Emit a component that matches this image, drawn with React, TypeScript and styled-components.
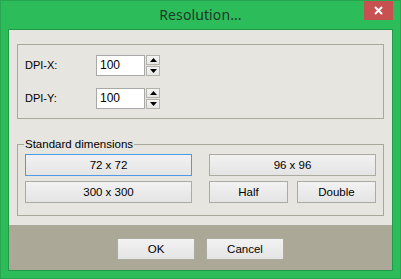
import React from 'react';
import styled, { createGlobalStyle } from 'styled-components';

const Global = createGlobalStyle`
  html, body { margin: 0; padding: 0; }
  body {
    font-family: 'Liberation Sans', Arial, sans-serif;
    font-size: 11px;
    color: #000;
  }
`;

const Window = styled.div`
  width: 401px;
  height: 279px;
  box-sizing: border-box;
  background: #2dbc5a;
  border: 1px solid #27a64f;
  display: flex;
  flex-direction: column;
  padding: 0 7px 7px 7px;
`;

const TitleBar = styled.div`
  height: 28px;
  display: grid;
  grid-template-columns: 1fr auto 1fr;
  align-items: start;
`;

const Title = styled.div`
  grid-column: 2;
  font-family: 'Noto Sans', 'Open Sans', sans-serif;
  font-size: 14px;
  color: #1c3a26;
  line-height: 28px;
  letter-spacing: 0.1px;
`;

const Close = styled.div`
  grid-column: 3;
  justify-self: end;
  width: 29px;
  height: 19px;
  background: #c75050;
  display: flex;
  align-items: center;
  justify-content: center;
`;

const Client = styled.div`
  flex: 1;
  border: 1px solid #1f9a47;
  background: #e6e5e0;
  display: flex;
  flex-direction: column;
`;

const Body = styled.div`
  flex: 1;
  padding: 14px 8px 0 8px;
  display: flex;
  flex-direction: column;
`;

const Group = styled.div`
  border: 1px solid #a9a89a;
  padding: 9px 7px 9px 7px;
  display: flex;
  flex-direction: column;
  gap: 11px;
`;

const Row = styled.div`
  display: flex;
  align-items: center;
  height: 22px;
`;

const Label = styled.span`
  width: 71px;
`;

const Input = styled.div`
  height: 19px;
  border: 1px solid #a8a8a8;
  background: #fff;
  font-size: 12px;
  line-height: 19px;
  padding-left: 3px;
  box-sizing: content-box;
  width: 44px;
`;

const Spin = styled.div`
  margin-left: 1px;
  display: flex;
  flex-direction: column;
  gap: 1px;
`;

const SpinBtn = styled.div`
  width: 12px;
  height: 8px;
  border: 1px solid #b3b2a8;
  background: linear-gradient(#f4f4f4, #e6e6e6);
  display: flex;
  align-items: center;
  justify-content: center;
`;

const Fieldset = styled.fieldset`
  margin: 18px 0 0 0;
  border: 1px solid #a9a89a;
  padding: 3px 7px 12px 7px;
  min-width: 0;
`;

const Legend = styled.legend`
  padding: 0 1px;
  margin-left: -1px;
  font-size: 11.5px;
  line-height: 14px;
`;

const Grid = styled.div`
  display: grid;
  grid-template-columns: 167px 167px;
  column-gap: 17px;
  row-gap: 5px;
`;

const Pair = styled.div`
  display: flex;
  gap: 9px;
`;

const Button = styled.div<{ $focus?: boolean; $w?: number }>`
  box-sizing: border-box;
  height: 22px;
  width: ${({ $w }) => ($w ? `${$w}px` : 'auto')};
  border: 1px solid ${({ $focus }) => ($focus ? '#4d9be6' : '#acaba0')};
  background: linear-gradient(#f2f2f2, #e4e4e4);
  display: flex;
  align-items: center;
  justify-content: center;
  font-size: 11.5px;
`;

const Footer = styled.div`
  height: 45px;
  background: #aba898;
  display: flex;
  justify-content: center;
  align-items: flex-start;
  padding-top: 13px;
  box-sizing: border-box;
  gap: 11px;
`;

const Arrow: React.FC<{ up?: boolean }> = ({ up }) => (
  <svg width="7" height="4" viewBox="0 0 7 4">
    <polygon points={up ? '3.5,0 7,4 0,4' : '0,0 7,0 3.5,4'} fill="#000" />
  </svg>
);

const Spinner: React.FC = () => (
  <Spin>
    <SpinBtn>
      <Arrow up />
    </SpinBtn>
    <SpinBtn>
      <Arrow />
    </SpinBtn>
  </Spin>
);

const App: React.FC = () => (
  <>
    <Global />
    <Window>
      <TitleBar>
        <Title>Resolution...</Title>
        <Close>
          <svg width="9" height="9" viewBox="0 0 9 9">
            <path d="M1 1L8 8M8 1L1 8" stroke="#fff" strokeWidth="2" />
          </svg>
        </Close>
      </TitleBar>
      <Client>
        <Body>
          <Group>
            <Row>
              <Label>DPI-X:</Label>
              <Input>100</Input>
              <Spinner />
            </Row>
            <Row>
              <Label>DPI-Y:</Label>
              <Input>100</Input>
              <Spinner />
            </Row>
          </Group>
          <Fieldset>
            <Legend>Standard dimensions</Legend>
            <Grid>
              <Button $focus>72 x 72</Button>
              <Button>96 x 96</Button>
              <Button>300 x 300</Button>
              <Pair>
                <Button $w={79}>Half</Button>
                <Button $w={79}>Double</Button>
              </Pair>
            </Grid>
          </Fieldset>
        </Body>
        <Footer>
          <Button $w={78}>OK</Button>
          <Button $w={78}>Cancel</Button>
        </Footer>
      </Client>
    </Window>
  </>
);

export default App;
